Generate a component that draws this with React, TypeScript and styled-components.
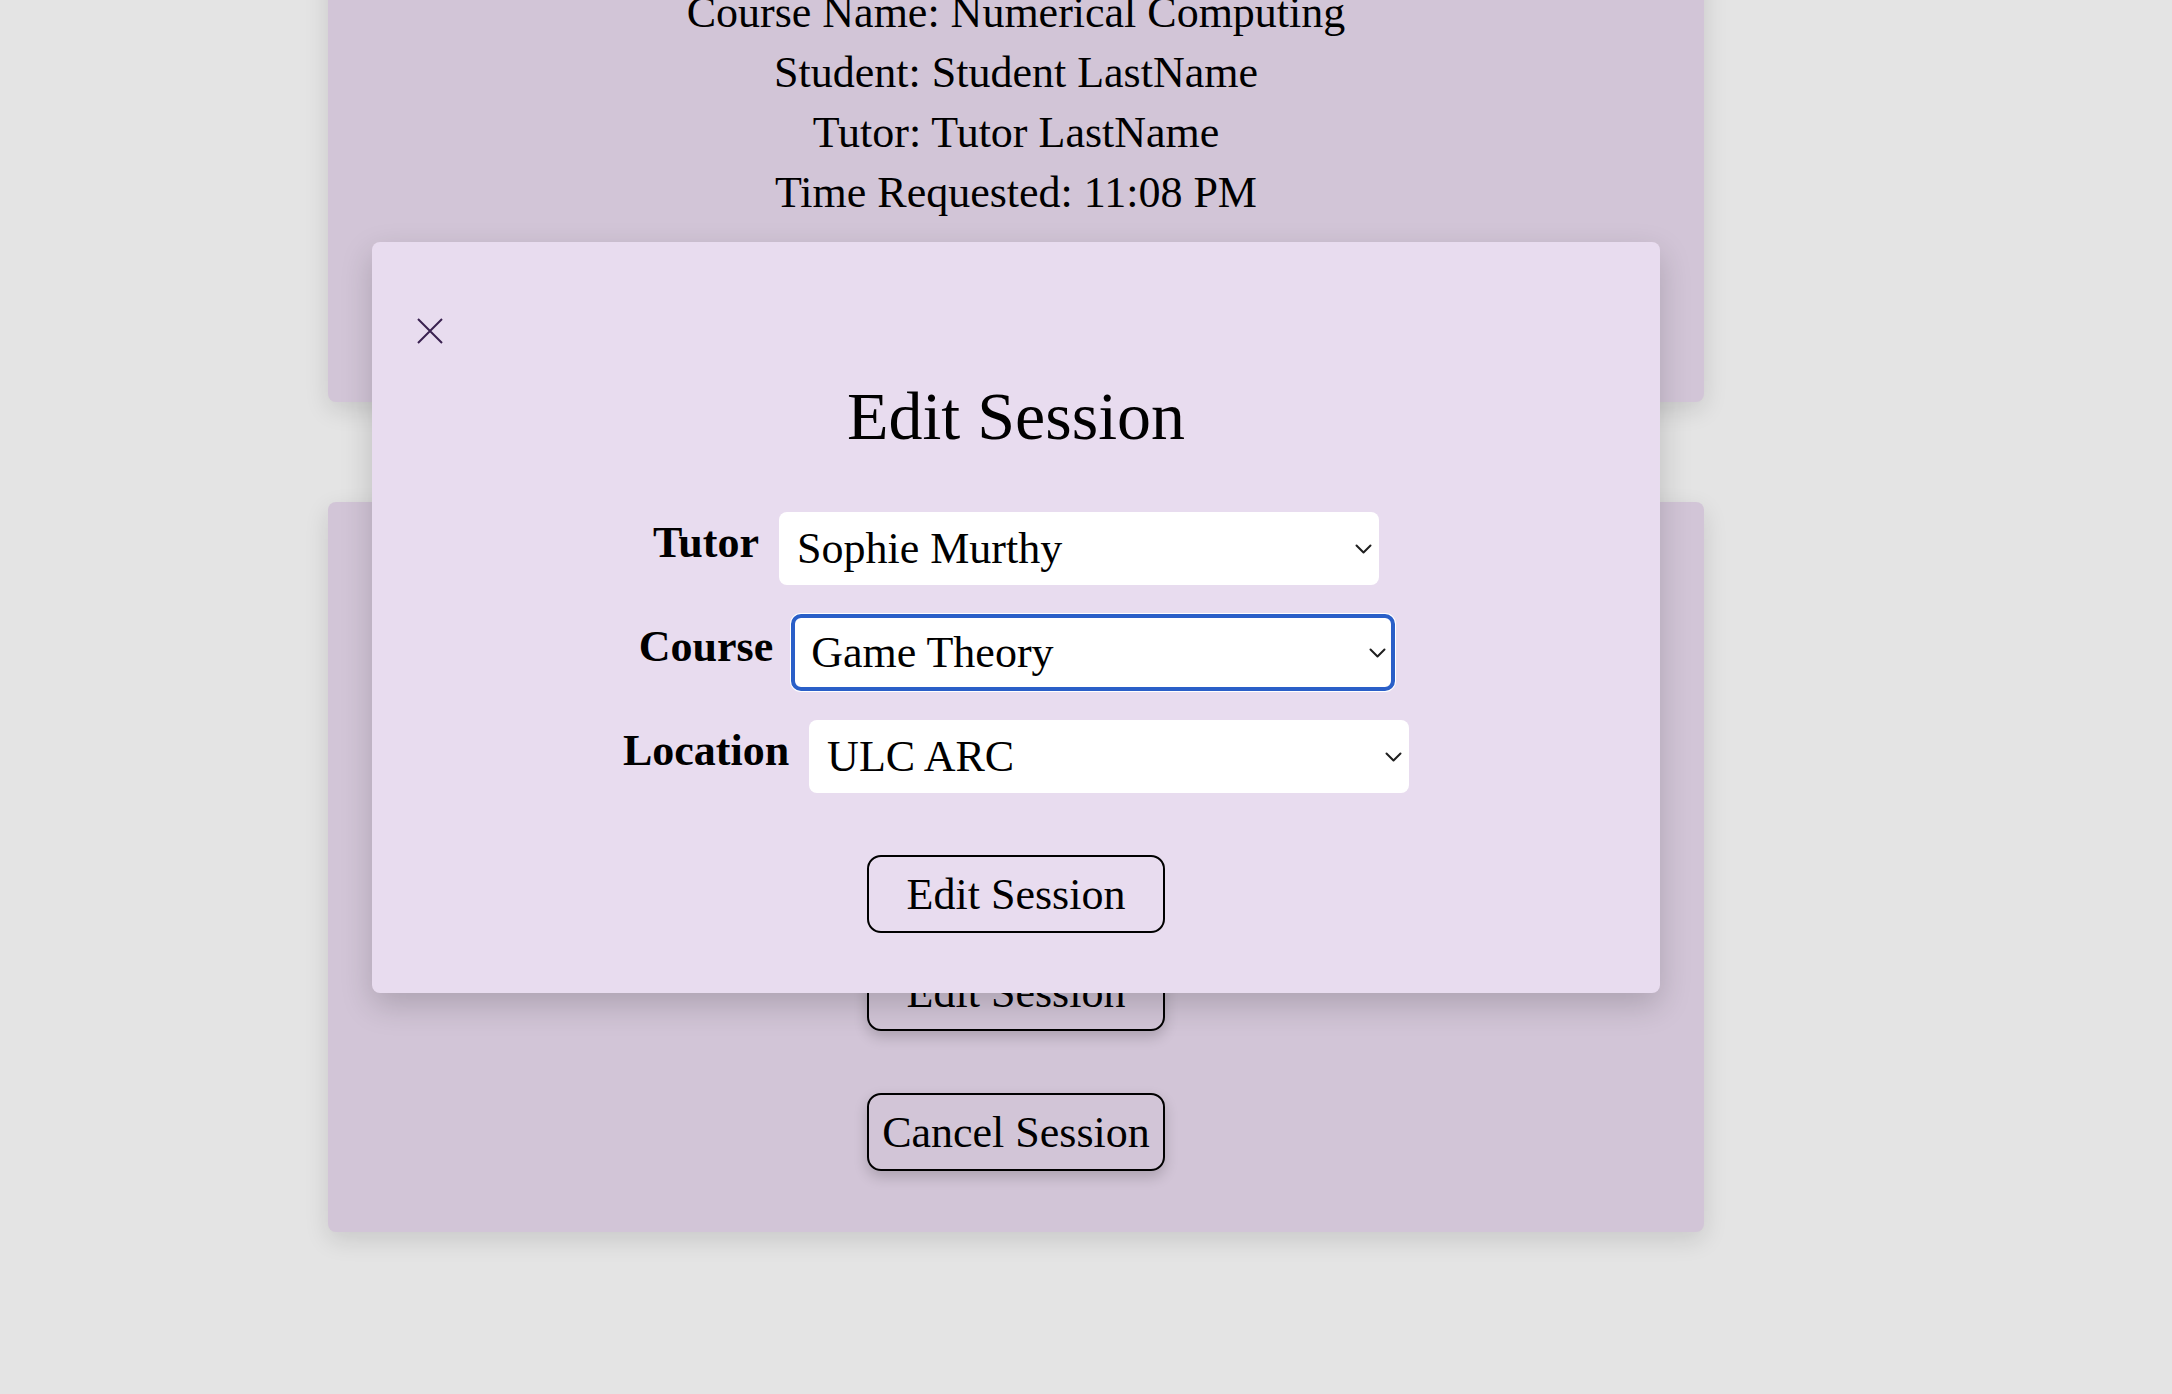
import React from "react";
import styled, { createGlobalStyle } from "styled-components";

const GlobalStyle = createGlobalStyle`
  html, body {
    margin: 0;
    padding: 0;
    background: #e4e4e4;
    font-family: "Liberation Serif", "Times New Roman", serif;
    color: #000;
    overflow: hidden;
  }
  * { box-sizing: border-box; }
`;

const Page = styled.div`
  width: 100%;
  min-height: 1394px;
`;

const Column = styled.main`
  position: relative;
  width: 1376px;
  margin: -60px 0 0 328px;
  display: flex;
  flex-direction: column;
  gap: 100px;
`;

const Card = styled.section<{ $padTop: number; $padBottom: number }>`
  background: #d2c5d7;
  border-radius: 8px;
  box-shadow: 0 8px 24px rgba(0, 0, 0, 0.12);
  padding: ${(p) => p.$padTop}px 0 ${(p) => p.$padBottom}px;
  text-align: center;
  display: flex;
  flex-direction: column;
  align-items: center;
`;

const InfoLine = styled.p`
  margin: 0;
  font-size: 44px;
  line-height: 60px;
`;

const ButtonStack = styled.div`
  margin-top: 111px;
  display: flex;
  flex-direction: column;
  align-items: center;
  gap: 62px;
`;

const OutlineButton = styled.button<{ $raised?: boolean }>`
  width: 298px;
  height: 78px;
  padding: 0;
  border: 2px solid #000;
  border-radius: 14px;
  background: transparent;
  font-family: "Liberation Serif", "Times New Roman", serif;
  font-size: 44px;
  line-height: normal;
  color: #000;
  cursor: pointer;
  box-shadow: ${(p) => (p.$raised ? "0 6px 14px rgba(0, 0, 0, 0.18)" : "none")};
`;

const Modal = styled.div`
  position: absolute;
  top: 302px;
  left: 44px;
  right: 44px;
  background: #e8dcef;
  border-radius: 8px;
  box-shadow: 0 12px 32px rgba(0, 0, 0, 0.18);
  padding: 76px 45px 60px;
  display: flex;
  flex-direction: column;
  align-items: stretch;
`;

const CloseButton = styled.button`
  width: 26px;
  height: 26px;
  padding: 0;
  border: none;
  background: none;
  cursor: pointer;
  display: block;
  color: #3a2150;
`;

const Title = styled.h2`
  margin: 33px 0 57px;
  font-size: 68px;
  line-height: 78px;
  font-weight: normal;
  text-align: center;
`;

const Form = styled.form`
  display: flex;
  flex-direction: column;
  align-items: center;
  gap: 31px;
`;

const Row = styled.div`
  display: flex;
  align-items: center;
  gap: 20px;
`;

const Label = styled.label`
  font-size: 44px;
  font-weight: bold;
  line-height: normal;
  margin-bottom: 12px;
`;

const SelectWrap = styled.div`
  position: relative;
  width: 600px;
  height: 73px;
`;

const Select = styled.select<{ $focused?: boolean }>`
  appearance: none;
  -webkit-appearance: none;
  width: 100%;
  height: 100%;
  border: none;
  border-radius: 8px;
  background: #fff;
  padding: 0 50px 0 18px;
  font-family: "Liberation Serif", "Times New Roman", serif;
  font-size: 44px;
  color: #000;
  outline: ${(p) => (p.$focused ? "4px solid #2a5fc8" : "none")};
  outline-offset: -2px;
  box-shadow: ${(p) => (p.$focused ? "0 0 0 3px #fff" : "none")};
`;

const Chevron = styled.svg`
  position: absolute;
  right: 7px;
  top: 50%;
  transform: translateY(-50%);
  width: 17px;
  height: 10px;
  pointer-events: none;
`;

const SubmitRow = styled.div`
  margin-top: 62px;
  display: flex;
  justify-content: center;
`;

const ChevronIcon = () => (
  <Chevron viewBox="0 0 17 10" fill="none">
    <path d="M1.5 1.5 L8.5 8.5 L15.5 1.5" stroke="#1f1f1f" strokeWidth="2" strokeLinecap="round" strokeLinejoin="round" />
  </Chevron>
);

const Field = ({
  label,
  value,
  options,
  focused,
}: {
  label: string;
  value: string;
  options: string[];
  focused?: boolean;
}) => (
  <Row>
    <Label>{label}</Label>
    <SelectWrap>
      <Select defaultValue={value} $focused={focused}>
        {options.map((o) => (
          <option key={o} value={o}>
            {o}
          </option>
        ))}
      </Select>
      <ChevronIcon />
    </SelectWrap>
  </Row>
);

export default function App() {
  return (
    <Page>
      <GlobalStyle />
      <Column>
        <Card $padTop={43} $padBottom={179}>
          <InfoLine>Course Name: Numerical Computing</InfoLine>
          <InfoLine>Student: Student LastName</InfoLine>
          <InfoLine>Tutor: Tutor LastName</InfoLine>
          <InfoLine>Time Requested: 11:08 PM</InfoLine>
        </Card>
        <Card $padTop={40} $padBottom={61}>
          <InfoLine>Course Name: Game Theory</InfoLine>
          <InfoLine>Student: Student LastName</InfoLine>
          <InfoLine>Tutor: Sophie Murthy</InfoLine>
          <InfoLine>Location: ULC ARC</InfoLine>
          <InfoLine>Time Requested: 10:42 PM</InfoLine>
          <ButtonStack>
            <OutlineButton $raised>Edit Session</OutlineButton>
            <OutlineButton $raised>Cancel Session</OutlineButton>
          </ButtonStack>
        </Card>
        <Modal role="dialog" aria-label="Edit Session">
          <CloseButton aria-label="Close">
            <svg width="26" height="26" viewBox="0 0 26 26" fill="none">
              <path d="M1 1 L25 25 M25 1 L1 25" stroke="currentColor" strokeWidth="2" />
            </svg>
          </CloseButton>
          <Title>Edit Session</Title>
          <Form onSubmit={(e) => e.preventDefault()}>
            <Field label="Tutor" value="Sophie Murthy" options={["Sophie Murthy", "Tutor LastName"]} />
            <Field label="Course" value="Game Theory" options={["Game Theory", "Numerical Computing"]} focused />
            <Field label="Location" value="ULC ARC" options={["ULC ARC", "Online"]} />
          </Form>
          <SubmitRow>
            <OutlineButton>Edit Session</OutlineButton>
          </SubmitRow>
        </Modal>
      </Column>
    </Page>
  );
}
